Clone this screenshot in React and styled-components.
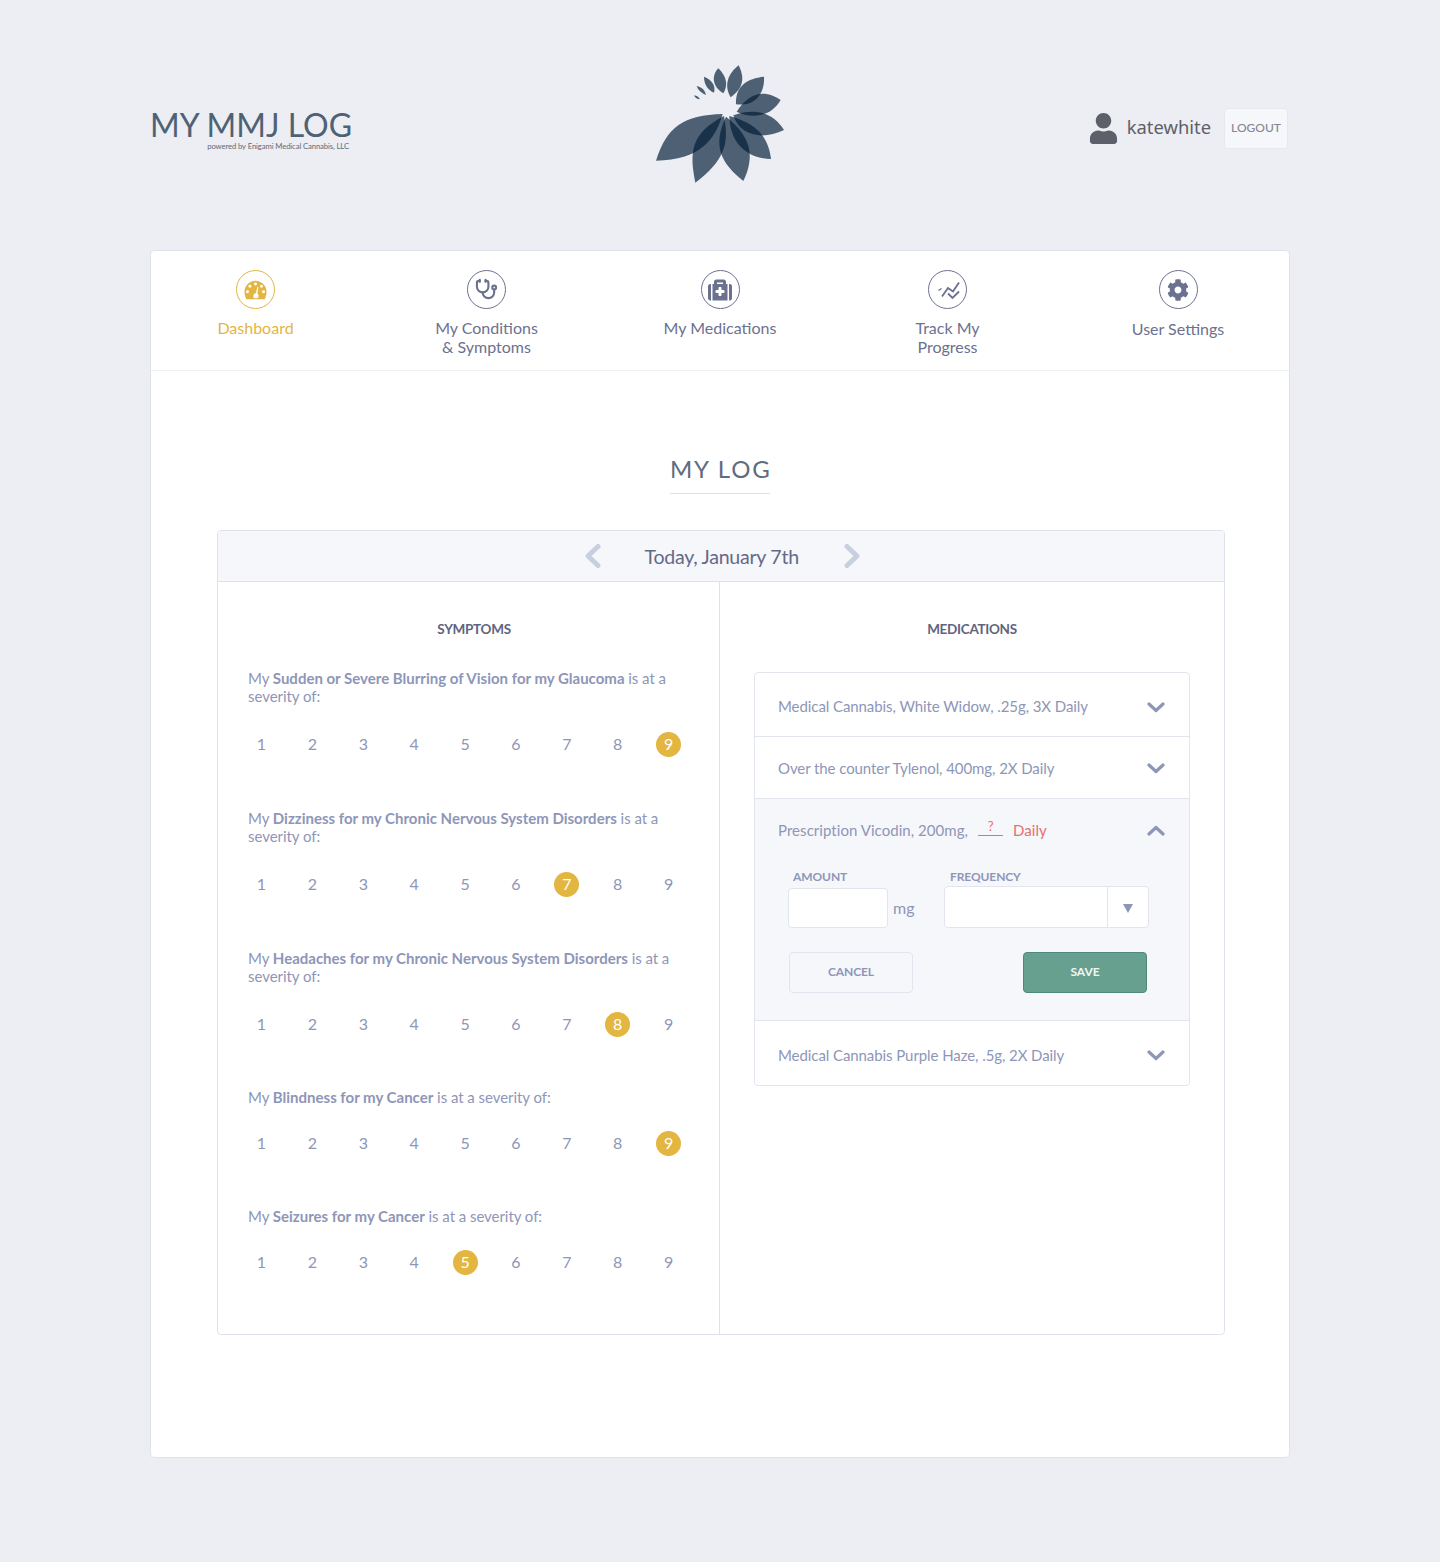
import React from "react";
import styled, { createGlobalStyle } from "styled-components";
import { FaUser, FaMedkit, FaCog } from "react-icons/fa";
import { Stethoscope } from "lucide-react";

const Global = createGlobalStyle`
  html, body { margin: 0; padding: 0; background: #eceef3; }
  * { box-sizing: border-box; }
  body { font-family: Lato, "Liberation Sans", sans-serif; }
`;

const Page = styled.div`
  width: 1140px;
  margin: 0 auto;
  padding-bottom: 104px;
`;
const Header = styled.header`
  height: 250px;
  display: grid;
  grid-template-columns: 1fr 160px 1fr;
  align-items: start;
  padding-top: 50px;
`;
const Brand = styled.div`
  width: 201px;
  padding-top: 55px;
  color: #4f6275;
`;
const BrandName = styled.div`
  font-size: 32px;
  line-height: 40px;
  white-space: nowrap;
`;
const BrandSub = styled.div`
  margin-top: -4px;
  font-size: 7.7px;
  line-height: 10px;
  text-align: right;
  padding-right: 2px;
  white-space: nowrap;
  letter-spacing: -0.1px;
  color: #5b6b7c;
`;
const UserBox = styled.div`
  display: flex;
  justify-content: flex-end;
  align-items: center;
  padding: 58px 2px 0 0;
  color: #5d6068;
`;
const UserName = styled.span`
  font-family: "Noto Sans", sans-serif;
  font-size: 18.4px;
  margin: 0 13px 5px 8px;
`;
const Logout = styled.button`
  width: 64px;
  height: 41px;
  background: #f6f7fb;
  border: 1px solid #e6e8ef;
  border-radius: 4px;
  color: #85878f;
  font: 500 12px Lato, sans-serif;
  padding: 0 0 2px;
`;
const Card = styled.main`
  background: #fff;
  border: 1px solid #dfe2ea;
  border-radius: 4px;
  height: 1208px;
`;
const Nav = styled.nav`
  display: grid;
  grid-template-columns: 209px 253px 214px 241px 220px;
  height: 120px;
  border-bottom: 1px solid #eef0f4;
`;
const NavItem = styled.a`
  display: flex;
  flex-direction: column;
  align-items: center;
  padding-top: 19px;
  color: ${p => p.$active ? "#e3b541" : "#6c7190"};
  font-size: 16px;
  line-height: 19px;
  text-align: center;
`;
const NavIcon = styled.span`
  width: 39px;
  height: 39px;
  border-radius: 50%;
  border: 1px solid currentColor;
  display: flex;
  align-items: center;
  justify-content: center;
  margin-bottom: ${p => p.$low ? 10 : 9}px;
`;
const Title = styled.h1`
  width: 100px;
  margin: 83px auto 36px;
  height: 40px;
  border-bottom: 1px solid #dfe2ea;
  font-size: 24px;
  line-height: 30px;
  font-weight: 400;
  letter-spacing: 1.8px;
  color: #5f6b80;
  text-align: center;
  white-space: nowrap;
`;
const Panel = styled.section`
  width: 1008px;
  height: 805px;
  margin-left: 66px;
  border: 1px solid #dfe2ea;
  border-radius: 4px;
  display: grid;
  grid-template-rows: 51px 1fr;
  grid-template-columns: 502px 1fr;
  overflow: hidden;
`;
const DateBar = styled.div`
  grid-column: 1 / 3;
  background: #f6f7fa;
  border-bottom: 1px solid #dfe2ea;
  display: flex;
  align-items: center;
  justify-content: center;
  gap: 44px;
  color: #646a88;
  font-size: 19.6px;
  padding-left: 2px;
`;
const DateText = styled.span`
  width: 155px;
  white-space: nowrap;
  letter-spacing: -0.28px;
`;
const Col = styled.div`
  padding: 38px ${p => p.$right ? "34px" : "19px"} 0 ${p => p.$right ? "34px" : "30px"};
  ${p => !p.$right && "border-right: 1px solid #dfe2ea;"}
`;
const ColTitle = styled.h2`
  margin: 0;
  font-size: 13.5px;
  line-height: 18px;
  font-weight: 700;
  color: #5f6480;
  text-align: center;
  letter-spacing: -0.3px;
`;
const SymList = styled.div`
  margin-top: 31px;
`;
const Sym = styled.div`
  padding-bottom: 52px;
`;
const SymText = styled.p`
  margin: ${p => p.$single ? "-1px 0 25px" : "0 0 27px"};
  font-size: 15px;
  line-height: 18px;
  color: #8e96b8;
  letter-spacing: -0.05px;
  b { font-weight: 700; letter-spacing: 0; }
`;
const Rating = styled.div`
  display: flex;
  gap: 25.9px;
  padding-left: 1px;
`;
const Num = styled.span`
  width: 25px;
  height: 25px;
  line-height: 23px;
  border-radius: 50%;
  text-align: center;
  font-size: 16px;
  color: ${p => p.$on ? "#fff" : "#8e96b8"};
  background: ${p => p.$on ? "#e3b541" : "transparent"};
`;
const Accordion = styled.div`
  margin-top: 34px;
  border: 1px solid #e3e5ee;
  border-radius: 4px;
  overflow: hidden;
`;
const MedRow = styled.div`
  height: ${p => p.$h}px;
  padding: ${p => p.$push}px 24px 0 23px;
  display: flex;
  justify-content: space-between;
  align-items: center;
  font-size: 15px;
  color: #8e96b8;
  letter-spacing: -0.08px;
  & + & { border-top: 1px solid #e3e5ee; }
  svg { margin-top: 2px; }
`;
const Open = styled.div`
  height: 223px;
  background: #f6f7fa;
  border-top: 1px solid #e3e5ee;
  border-bottom: 1px solid #e3e5ee;
  padding: 0 24px 0 23px;
`;
const OpenHead = styled.div`
  height: 63px;
  display: flex;
  justify-content: space-between;
  align-items: center;
  font-size: 15px;
  color: #8e96b8;
  letter-spacing: 0.05px;
`;
const OpenTitle = styled.span`
  margin-bottom: 2px;
`;
const Missing = styled.span`
  color: #e96f6f;
  margin-left: 10px;
`;
const Blank = styled.span`
  display: inline-block;
  vertical-align: 5px;
  width: 25px;
  height: 15px;
  border-bottom: 1px solid #e96f6f;
  margin-right: 10px;
  text-align: center;
  font-size: 13px;
  line-height: 11px;
`;
const Fields = styled.div`
  display: flex;
  align-items: flex-end;
  margin: 0 0 0 10px;
  height: 66px;
`;
const Field = styled.div`
  display: flex;
  flex-direction: column;
  align-items: flex-start;
`;
const Label = styled.label`
  font-size: 12px;
  line-height: 14px;
  font-weight: 700;
  color: #8e96b8;
  margin: 0 0 ${p => p.$tight ? 2 : 4}px ${p => p.$tight ? 6 : 5}px;
  letter-spacing: -0.1px;
`;
const Input = styled.div`
  width: 100px;
  height: 40px;
  background: #fff;
  border: 1px solid #e3e5ee;
  border-radius: 4px;
`;
const Unit = styled.span`
  width: 56px;
  padding-left: 5px;
  height: 40px;
  line-height: 40px;
  font-size: 16px;
  color: #8e96b8;
`;
const Select = styled.div`
  width: 205px;
  height: 42px;
  background: #fff;
  border: 1px solid #e3e5ee;
  border-radius: 4px;
  display: flex;
  justify-content: flex-end;
`;
const Caret = styled.span`
  width: 41px;
  padding-top: 3px;
  border-left: 1px solid #e3e5ee;
  display: flex;
  align-items: center;
  justify-content: center;
`;
const Buttons = styled.div`
  display: flex;
  justify-content: space-between;
  margin: 24px 18px 0 11px;
`;
const Btn = styled.button`
  width: 124px;
  height: 41px;
  padding: 0 0 2px;
  border-radius: 4px;
  font: 700 12px Lato, sans-serif;
  letter-spacing: -0.1px;
  border: 1px solid ${p => p.$save ? "#4f8a78" : "#e3e5ee"};
  background: ${p => p.$save ? "#67a08f" : "#f6f7fa"};
  color: ${p => p.$save ? "#f2f7f5" : "#8e96b8"};
`;

const Logo = () => (
  <svg width="160" height="150" viewBox="0 0 480 450">
    <g fill="#001b35" fillOpacity=".67">
      <path d="M48 332C80 230 130 195 248 192C225 270 180 330 48 332Z" />
      <path d="M166 398C148 310 150 250 252 198C268 280 255 330 166 398Z" />
      <path d="M310 393C245 340 215 290 258 200C335 260 345 320 310 393Z" />
      <path d="M393 327C320 325 270 280 268 198C350 220 385 260 393 327Z" />
      <path d="M432 240C370 270 300 260 280 196C350 172 400 190 432 240Z" />
      <path d="M422 150C390 205 330 205 290 185C335 115 385 125 422 150Z" />
      <path d="M372 80C375 130 345 170 288 163C285 110 320 85 372 80Z" />
      <path d="M296 46C315 85 310 115 272 142C250 105 265 70 296 46Z" />
      <path d="M235 55C260 80 265 105 250 130C215 110 215 75 235 55Z" />
      <path d="M192 80C215 90 228 105 222 128C200 118 192 100 192 80Z" />
      <path d="M170 108C185 112 195 120 198 135C185 130 175 122 170 108Z" />
      <path d="M162 136C170 137 175 140 180 148C172 148 165 144 162 136Z" />
    </g>
  </svg>
);

const Gauge = () => (
  <svg width="23" height="20" viewBox="0 0 25 21">
    <path d="M12.5 0.5C5.8 0.5 0.5 6 0.5 12.5C0.5 15.5 1.3 18 2.5 20.5H22.5C23.7 18 24.5 15.5 24.5 12.5C24.5 6 19.2 0.5 12.5 0.5Z" fill="#e3b541" />
    <g fill="#fff">
      <circle cx="12.5" cy="4" r="1.6" />
      <circle cx="6.5" cy="6.5" r="1.6" />
      <circle cx="19" cy="6.5" r="1.6" />
      <circle cx="3.8" cy="12.5" r="1.6" />
      <circle cx="21.2" cy="12.5" r="1.6" />
      <path d="M14.6 7L15.6 7.4L14.6 14.2C15.6 15 16 16 15.8 17.5C15.6 19 14.8 19.5 12.5 19.5C10.6 19.5 10 18.5 10.2 17C10.4 15.3 11.5 14 13 13.8Z" />
    </g>
  </svg>
);
const Chart = () => (
  <svg width="24" height="24" viewBox="0 0 24 24" fill="none" stroke="#6c7190" strokeWidth="1.9">
    <path d="M6 18.5L12 10L17 13.5L23 4.5" />
    <path d="M12 15.5L16.5 20L23 13.5" />
    <path d="M2.5 12.5L5.5 10.5" strokeWidth="1.3" />
  </svg>
);
const Chevron = ({ up }) => (
  <svg width="18" height="11" viewBox="0 0 18 11" fill="none" stroke="#8e96b8" strokeWidth="3.2" strokeLinecap="round" strokeLinejoin="round">
    <path d={up ? "M2 9L9 2.5L16 9" : "M2 2L9 8.5L16 2"} />
  </svg>
);
const Side = ({ right }) => (
  <svg width="16" height="24" viewBox="0 0 16 24" fill="none" stroke="#c7cfe0" strokeWidth="5" strokeLinecap="round" strokeLinejoin="round">
    <path d={right ? "M3 2.5L13 12L3 21.5" : "M13 2.5L3 12L13 21.5"} />
  </svg>
);

const navItems = [
  { label: ["Dashboard"], icon: <Gauge />, active: true },
  { label: ["My Conditions", "& Symptoms"], icon: <Stethoscope size={23} strokeWidth={2.2} /> },
  { label: ["My Medications"], icon: <FaMedkit size={24} /> },
  { label: ["Track My", "Progress"], icon: <Chart /> },
  { label: ["User Settings"], icon: <FaCog size={22} />, low: true },
];
const symptoms = [
  { name: "Sudden or Severe Blurring of Vision for my Glaucoma", tail: " is at a severity of:", v: 9 },
  { name: "Dizziness for my Chronic Nervous System Disorders", tail: " is at a severity of:", v: 7 },
  { name: "Headaches for my Chronic Nervous System Disorders", tail: " is at a severity of:", v: 8 },
  { name: "Blindness for my Cancer", tail: " is at a severity of:", v: 9, single: true },
  { name: "Seizures for my Cancer", tail: " is at a severity of:", v: 5, single: true },
];

export default function App() {
  return (
    <>
      <Global />
      <Page>
        <Header>
          <Brand>
            <BrandName>MY MMJ LOG</BrandName>
            <BrandSub>powered by Enigami Medical Cannabis, LLC</BrandSub>
          </Brand>
          <Logo />
          <UserBox>
            <FaUser size={31} />
            <UserName>katewhite</UserName>
            <Logout>LOGOUT</Logout>
          </UserBox>
        </Header>
        <Card>
          <Nav>
            {navItems.map(n => (
              <NavItem key={n.label[0]} $active={n.active}>
                <NavIcon $low={n.low}>{n.icon}</NavIcon>
                {n.label.map(l => <span key={l}>{l}</span>)}
              </NavItem>
            ))}
          </Nav>
          <Title>MY LOG</Title>
          <Panel>
            <DateBar>
              <Side />
              <DateText>Today, January 7th</DateText>
              <Side right />
            </DateBar>
            <Col>
              <ColTitle>SYMPTOMS</ColTitle>
              <SymList>
                {symptoms.map(s => (
                  <Sym key={s.name}>
                    <SymText $single={s.single}>My <b>{s.name}</b>{s.tail}</SymText>
                    <Rating>
                      {[1, 2, 3, 4, 5, 6, 7, 8, 9].map(i => <Num key={i} $on={i === s.v}>{i}</Num>)}
                    </Rating>
                  </Sym>
                ))}
              </SymList>
            </Col>
            <Col $right>
              <ColTitle>MEDICATIONS</ColTitle>
              <Accordion>
                <MedRow $h={63} $push={3}>Medical Cannabis, White Widow, .25g, 3X Daily<Chevron /></MedRow>
                <MedRow $h={62} $push={0}>Over the counter Tylenol, 400mg, 2X Daily<Chevron /></MedRow>
                <Open>
                  <OpenHead>
                    <OpenTitle>Prescription Vicodin, 200mg,<Missing><Blank>?</Blank>Daily</Missing></OpenTitle>
                    <Chevron up />
                  </OpenHead>
                  <Fields>
                    <Field>
                      <Label>AMOUNT</Label>
                      <Input />
                    </Field>
                    <Unit>mg</Unit>
                    <Field>
                      <Label $tight>FREQUENCY</Label>
                      <Select>
                        <Caret>
                          <svg width="10" height="9" viewBox="0 0 10 9"><path d="M0 0H10L5 9Z" fill="#8e96b8" /></svg>
                        </Caret>
                      </Select>
                    </Field>
                  </Fields>
                  <Buttons>
                    <Btn>CANCEL</Btn>
                    <Btn $save>SAVE</Btn>
                  </Buttons>
                </Open>
                <MedRow $h={64} $push={3}>Medical Cannabis Purple Haze, .5g, 2X Daily<Chevron /></MedRow>
              </Accordion>
            </Col>
          </Panel>
        </Card>
      </Page>
    </>
  );
}
